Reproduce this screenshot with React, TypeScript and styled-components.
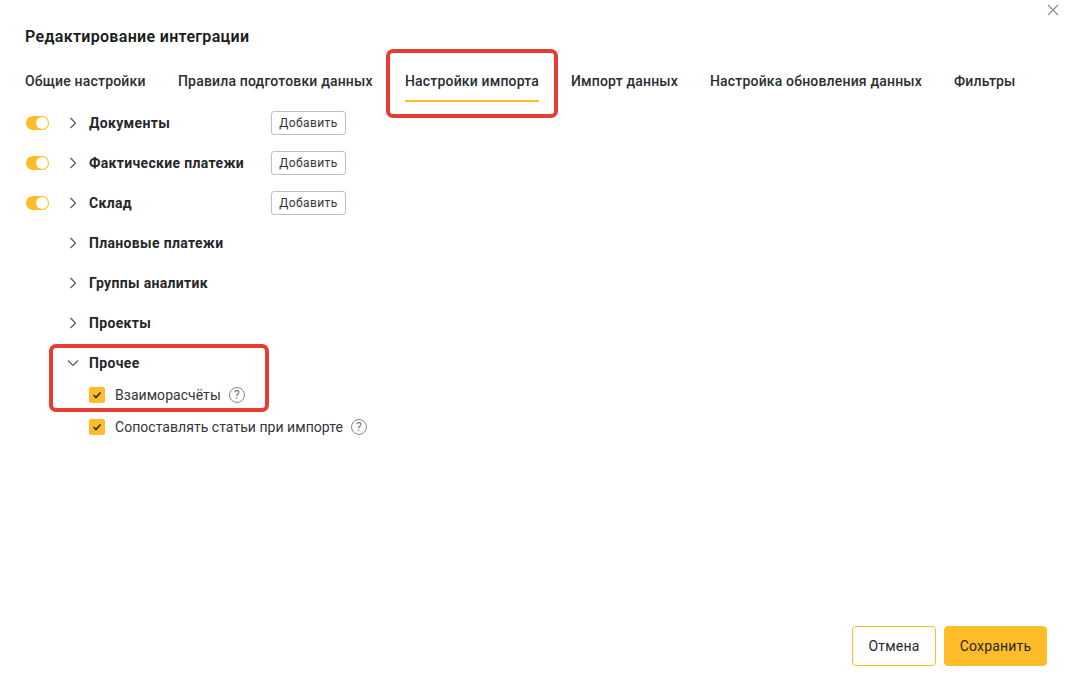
import React from "react";
import styled, { createGlobalStyle } from "styled-components";

const Global = createGlobalStyle`
  html, body { margin: 0; padding: 0; background: #fff; }
  body { font-family: "Roboto", "Liberation Sans", sans-serif; color: #25272c; overflow: hidden; }
`;

const Dialog = styled.div`
  position: relative;
  width: 1067px;
  height: 687px;
  box-sizing: border-box;
  padding: 28px 20px 21px 25px;
  display: flex;
  flex-direction: column;
  background: #fff;
`;

const Close = styled.button`
  position: absolute;
  top: 4px;
  right: 8px;
  width: 12px;
  height: 12px;
  padding: 0;
  border: 0;
  background: none;
  color: #8a8d94;
  display: flex;
`;

const Title = styled.h1`
  margin: 0;
  font-family: "Roboto", sans-serif;
  font-size: 16px;
  line-height: 18px;
  font-weight: 600;
  letter-spacing: 0.32px;
  color: #1b1c20;
`;

const Tabs = styled.nav`
  display: flex;
  gap: 32px;
  margin-top: 20px;
  height: 36px;
`;

const Tab = styled.div<{ $active?: boolean; $w: number }>`
  box-sizing: border-box;
  width: ${(p) => p.$w}px;
  height: 36px;
  padding-top: 7px;
  font-family: "Roboto", sans-serif;
  font-size: 14px;
  line-height: 16px;
  font-weight: 500;
  letter-spacing: 0.18px;
  white-space: nowrap;
  color: #2b2d33;
  border-bottom: 2px solid ${(p) => (p.$active ? "#ffbc29" : "transparent")};
`;

const List = styled.div`
  margin-top: 1px;
  display: flex;
  flex-direction: column;
`;

const Row = styled.div`
  display: flex;
  align-items: center;
  height: 40px;
  flex: none;
`;

const ToggleSlot = styled.div`
  width: 41px;
  padding-left: 1px;
  box-sizing: border-box;
  display: flex;
  align-items: center;
`;

const Toggle = styled.span`
  width: 23px;
  height: 14px;
  border-radius: 7px;
  background: #ffbc29;
  display: flex;
  justify-content: flex-end;
  align-items: center;
  padding-right: 1px;
  box-sizing: border-box;
`;

const Knob = styled.span`
  width: 12px;
  height: 12px;
  border-radius: 50%;
  background: #fff;
`;

const Chevron = styled.span`
  width: 14px;
  height: 14px;
  margin-right: 9px;
  color: #55585f;
  display: flex;
`;

const RowTitle = styled.span`
  width: 182px;
  font-family: "Roboto", sans-serif;
  font-size: 14px;
  line-height: 18px;
  font-weight: 700;
  letter-spacing: 0.33px;
  white-space: nowrap;
  color: #25272c;
`;

const AddButton = styled.button`
  width: 75px;
  height: 24px;
  padding: 0;
  box-sizing: border-box;
  border: 1px solid #bfc1c5;
  border-radius: 3px;
  background: #fff;
  font-family: "Roboto", sans-serif;
  font-size: 12px;
  letter-spacing: 0.42px;
  color: #33353b;
`;

const CheckList = styled.div`
  margin-top: -4px;
  display: flex;
  flex-direction: column;
`;

const CheckRow = styled.div`
  display: flex;
  align-items: center;
  height: 32px;
  flex: none;
  padding-left: 64px;
`;

const Box = styled.span`
  width: 16px;
  height: 16px;
  border-radius: 2px;
  background: #ffbc29;
  color: #25272c;
  display: flex;
  align-items: center;
  justify-content: center;
  margin-right: 10px;
`;

const CheckLabel = styled.span`
  font-family: "Roboto", sans-serif;
  font-size: 14px;
  line-height: 18px;
  letter-spacing: 0.04px;
  white-space: nowrap;
  color: #33353b;
`;

const Help = styled.span`
  margin-left: 8px;
  width: 16px;
  height: 16px;
  box-sizing: border-box;
  border: 1px solid #85888e;
  border-radius: 50%;
  color: #6f7278;
  font-family: "Roboto", sans-serif;
  font-size: 12px;
  line-height: 14px;
  text-align: center;
`;

const Footer = styled.div`
  margin-top: auto;
  display: flex;
  justify-content: flex-end;
  gap: 8px;
`;

const FooterButton = styled.button<{ $primary?: boolean; $w: number }>`
  width: ${(p) => p.$w}px;
  height: 40px;
  padding: 0;
  box-sizing: border-box;
  border-radius: 4px;
  border: 1px solid #ffbc29;
  background: ${(p) => (p.$primary ? "#ffbc29" : "#fff")};
  font-family: "Roboto", sans-serif;
  font-size: 14px;
  letter-spacing: 0.2px;
  color: #25272c;
`;

const Highlight = styled.div<{ $x: number; $y: number; $w: number; $h: number }>`
  position: absolute;
  left: ${(p) => p.$x}px;
  top: ${(p) => p.$y}px;
  width: ${(p) => p.$w}px;
  height: ${(p) => p.$h}px;
  box-sizing: border-box;
  border: 4px solid #e53d32;
  border-radius: 7px;
  pointer-events: none;
`;

const ChevronRight = () => (
  <svg width="14" height="14" viewBox="0 0 14 14" fill="none" stroke="currentColor" strokeWidth="1.2">
    <path d="M4.5 2 L9.5 7 L4.5 12" />
  </svg>
);

const ChevronDown = () => (
  <svg width="14" height="14" viewBox="0 0 14 14" fill="none" stroke="currentColor" strokeWidth="1.2">
    <path d="M2 4.5 L7 9.5 L12 4.5" />
  </svg>
);

const Tick = () => (
  <svg width="10" height="10" viewBox="0 0 10 10" fill="none" stroke="currentColor" strokeWidth="1.6">
    <path d="M1.5 5 L4 7.5 L8.5 2.5" />
  </svg>
);

const tabs: [string, number][] = [
  ["Общие настройки", 121],
  ["Правила подготовки данных", 195],
  ["Настройки импорта", 134],
  ["Импорт данных", 107],
  ["Настройка обновления данных", 212],
  ["Фильтры", 62],
];

const sections: [string, boolean][] = [
  ["Документы", true],
  ["Фактические платежи", true],
  ["Склад", true],
  ["Плановые платежи", false],
  ["Группы аналитик", false],
  ["Проекты", false],
];

export default function App() {
  return (
    <Dialog>
      <Global />
      <Close aria-label="Закрыть">
        <svg width="12" height="12" viewBox="0 0 12 12" fill="none" stroke="currentColor" strokeWidth="1.1">
          <path d="M1 1 L11 11 M11 1 L1 11" />
        </svg>
      </Close>
      <Title>Редактирование интеграции</Title>
      <Tabs>
        {tabs.map(([t, w]) => (
          <Tab key={t} $w={w} $active={t === "Настройки импорта"}>{t}</Tab>
        ))}
      </Tabs>
      <List>
        {sections.map(([name, on]) => (
          <Row key={name}>
            <ToggleSlot>{on && <Toggle><Knob /></Toggle>}</ToggleSlot>
            <Chevron><ChevronRight /></Chevron>
            <RowTitle>{name}</RowTitle>
            {on && <AddButton>Добавить</AddButton>}
          </Row>
        ))}
        <Row>
          <ToggleSlot />
          <Chevron><ChevronDown /></Chevron>
          <RowTitle>Прочее</RowTitle>
        </Row>
        <CheckList>
          <CheckRow>
            <Box><Tick /></Box>
            <CheckLabel>Взаиморасчёты</CheckLabel>
            <Help>?</Help>
          </CheckRow>
          <CheckRow>
            <Box><Tick /></Box>
            <CheckLabel>Сопоставлять статьи при импорте</CheckLabel>
            <Help>?</Help>
          </CheckRow>
        </CheckList>
      </List>
      <Footer>
        <FooterButton $w={84}>Отмена</FooterButton>
        <FooterButton $w={103} $primary>Сохранить</FooterButton>
      </Footer>
      <Highlight $x={386} $y={49} $w={172} $h={69} />
      <Highlight $x={49} $y={344} $w={220} $h={68} />
    </Dialog>
  );
}
